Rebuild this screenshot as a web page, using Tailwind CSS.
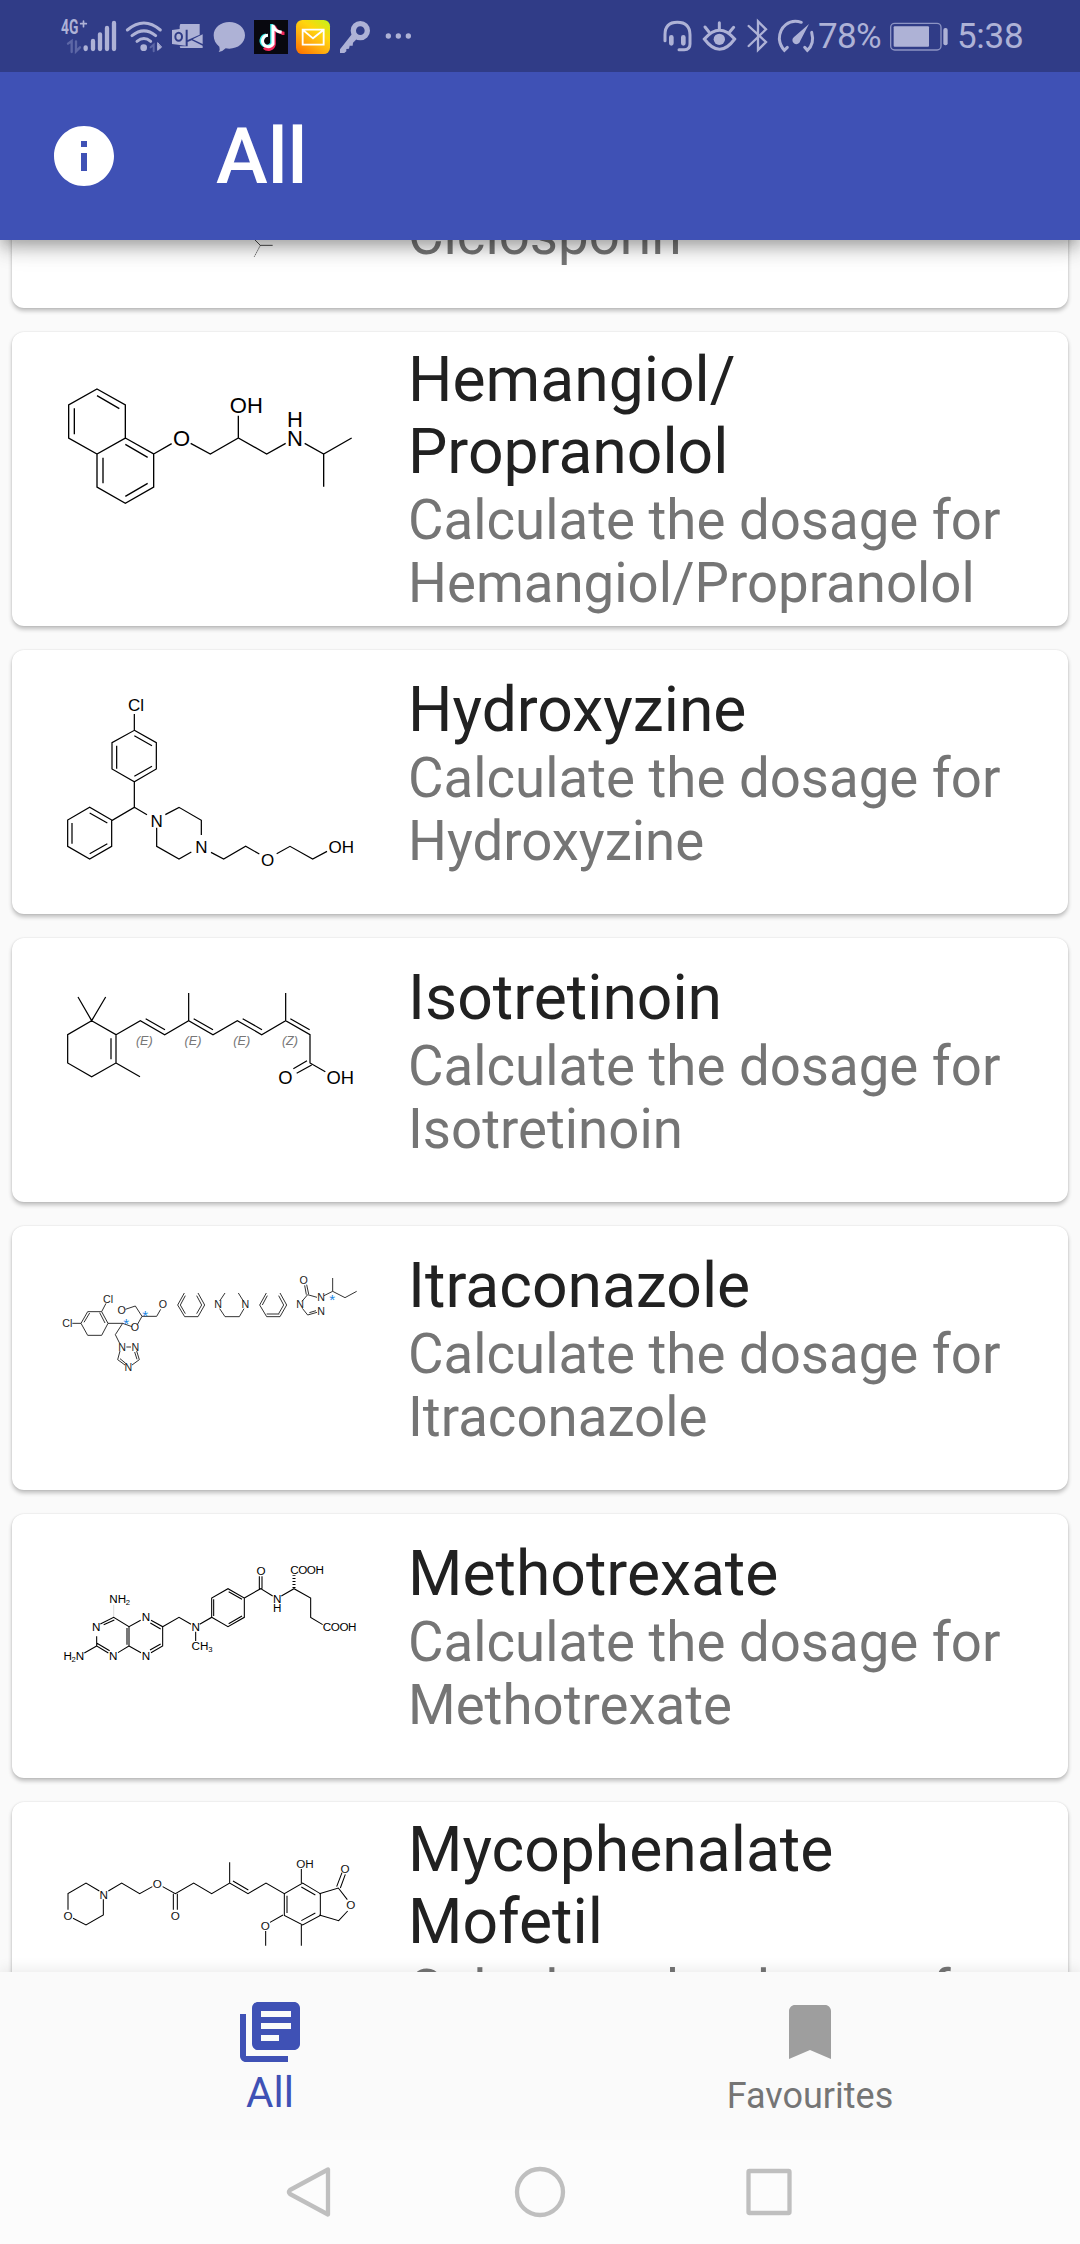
<!DOCTYPE html>
<html lang="en">
<head>
<meta charset="utf-8">
<title>All</title>
<script src="https://cdn.jsdelivr.net/npm/@tailwindcss/browser@4"></script>
</head>
<body class="w-[1080px] h-[2244px] flex flex-col overflow-hidden bg-[#fafafa] font-['Roboto',sans-serif]">

<!-- status bar -->
<div class="relative z-20 h-[72px] shrink-0 bg-[#303c87] flex items-center pl-10 text-[#aeb2d6]">
  <svg class="w-[400px] h-[72px]" viewBox="0 0 1200 216" fill="none" stroke-linecap="round">
    <text x="63" y="103" font-family="Roboto" font-weight="700" font-size="58" textLength="52" lengthAdjust="spacingAndGlyphs" fill="#aeb2d6">4G</text>
    <path d="M122 71h17M130.500 63v17" stroke="#aeb2d6" stroke-width="5"/>
    <path d="M84 131l11-8v33M108 124v30l12-12" stroke="#5d67a6" stroke-width="7"/>
    <g stroke="#aeb2d6" stroke-width="13"><path d="M137 142v5M159 123v24M180 103v44M201 84v63M222 69v78"/></g>
    <g stroke="#aeb2d6" stroke-width="9"><path d="M262 90Q312 48 361 90M276 107Q312 78 347 107M291 124Q312 107 332 124"/></g>
    <circle cx="311" cy="143" r="10" fill="#aeb2d6"/>
    <path d="M332 142l9-8v20" stroke="#5d67a6" stroke-width="6"/><path d="M353 129v22l11-9z" fill="#aeb2d6" stroke="#aeb2d6" stroke-width="3"/>
    <path fill="#aeb2d6" d="M421 72h58v32l-36 16v-31h-24v-11zM488 103v29l-30-14zM419 139h24v-13l12-5 33 16v7h-67z"/>
    <path fill="#aeb2d6" d="M396 90l41-5v52l-41-5z"/><ellipse cx="416" cy="110" rx="10" ry="12" stroke="#303c87" stroke-width="6"/>
    <path fill="#aeb2d6" d="M568 66c26 0 47 17 47 40s-21 40-47 40q-6 0-11-1-9 10-21 11 5-7 2-16c-11-8-17-20-17-34 0-23 21-40 47-40z"/>
    <rect x="642" y="60" width="102" height="102" fill="#08080f"/>
    <g stroke-width="9" stroke-linecap="butt"><path stroke="#35e7e5" d="M695 72v58a17 17 0 1 1-17-25M695 73q4 22 30 24"/><path stroke="#f2295b" d="M703 77v55a18 18 0 0 1-31 11M703 78q6 19 26 21v6"/><path stroke="#fff" d="M699 74v58a17 17 0 1 1-15-26M699 76q6 19 26 21"/></g>
    <defs><linearGradient id="mail" x1=".9" y1="0" x2=".2" y2="1"><stop stop-color="#c8f018"/><stop offset=".35" stop-color="#ffd60e"/><stop offset=".65" stop-color="#ffb010"/><stop offset="1" stop-color="#ff7a00"/></linearGradient></defs>
    <rect x="768" y="60" width="102" height="102" rx="19" fill="url(#mail)"/>
    <path d="M788 89h63v45h-63zM789 90l30 25 31-25" stroke="#fff" stroke-width="5.500" stroke-linecap="butt"/>
    <circle cx="961" cy="92" r="21" stroke="#aeb2d6" stroke-width="16"/>
    <path fill="#aeb2d6" d="M936 102l15 14-12 12-1 9-9 0-2 9-8 1 0 7-6 5h-13v-11z"/>
    <g fill="#aeb2d6"><circle cx="1045" cy="108" r="8"/><circle cx="1075" cy="108" r="8"/><circle cx="1105" cy="108" r="8"/></g>
  </svg>
  <svg class="w-[158px] h-[72px] ml-[220px]" viewBox="60 0 474 216" fill="none" stroke="#aeb2d6" stroke-linecap="round">
    <path stroke-width="9" d="M75 122v-18q0-37 37-37t38 37v28q0 17-17 17h-16"/>
    <path stroke-width="14" d="M94 112v18M130 112v18"/>
    <path stroke-width="9" d="M193 117q46-53 91 0-45 62-91 0z"/><circle cx="238" cy="118" r="17" fill="#aeb2d6" stroke="none"/>
    <path stroke-width="9" d="M238 68v20M195 81l12 15M281 82l-12 14"/>
    <path stroke-width="7" d="M326 78l52 48-24 24V64l24 24-52 50"/>
    <path stroke-width="9" d="M484 67c-36-12-66 14-66 50q2 19 15 34l9-9M515 97c6 22 1 42-13 54l-8-9"/>
    <path fill="#aeb2d6" stroke="none" d="M507 72l-26 50a12 12 0 1 1-18-12z"/>
  </svg>
  <span class="text-[35px] leading-none w-[72px] tracking-[-0.7px]">78%</span>
  <svg class="w-[60px] h-[72px]" viewBox="750 0 180 216" fill="none"><rect x="752" y="70" width="151" height="80" rx="12" stroke="#8d94c4" stroke-width="4"/><rect x="761" y="79" width="106" height="61" rx="3" fill="#aeb2d6"/><rect x="910" y="84" width="13" height="52" rx="6" fill="#aeb2d6"/></svg>
  <span class="text-[35px] leading-none ml-[7px] tracking-[-0.3px]">5:38</span>
</div>

<!-- app bar -->
<header class="relative z-10 h-[168px] shrink-0 bg-[#3f51b5] flex items-center pl-12 text-white shadow-[0_6px_12px_-3px_rgba(0,0,0,.2),0_12px_15px_rgba(0,0,0,.14),0_3px_30px_rgba(0,0,0,.12)]">
  <svg class="size-[72px]" viewBox="0 0 24 24" fill="currentColor"><path d="M12 2C6.480 2 2 6.480 2 12s4.480 10 10 10 10-4.480 10-10S17.520 2 12 2zm1 15h-2v-6h2v6zm0-8h-2V7h2v2z"/></svg>
  <h1 class="ml-24 pt-0.5 text-[78px] leading-none font-medium">All</h1>
</header>

<main class="h-[1732px] shrink-0 overflow-hidden px-3">
 <div class="-mt-[196px] flex flex-col gap-6 text-[#757575] text-[54.6px] leading-[63px] font-['Roboto',sans-serif]">

  <section class="h-[264px] shrink-0 rounded-xl bg-white shadow-[0_3px_4px_rgba(0,0,0,.24),0_0_2px_rgba(0,0,0,.12)] flex items-start pl-7 gap-7">
    <svg class="w-[340px] h-[264px]" viewBox="120 -528 1020 792" fill="none" stroke="#222" stroke-width="2.500"><path d="M750 45l31 31h37"/><path stroke-dasharray="4 3" d="M781 76l-18 34"/></svg>
    <div class="pt-6"><h2 class="text-[62.4px] leading-[72px] text-[#212121]">Ciclosporin</h2><p class="pt-px">Calculate the dosage for<br>Ciclosporin</p></div>
  </section>

  <section class="h-[294px] shrink-0 rounded-xl bg-white shadow-[0_3px_4px_rgba(0,0,0,.24),0_0_2px_rgba(0,0,0,.12)] flex items-start pl-7 gap-7">
    <svg class="w-[340px] h-[200px]" viewBox="120 336 1020 600" fill="none" stroke="#000" stroke-width="4">
      <path d="M291 507l85 48v99l-85 48-85-48v-99zM376 654l85 48v99l-85 49-85-49v-99M291 527l67 39M223 565v78M376 673l67 39M309 713v77M376 829l67-39M461 702l54-31M572 670l59 32 84-48 85 48 57-32M715 654v-67M914 670l57 32 84-48M971 702v98"/>
      <g fill="#000" stroke="none" font-family="Liberation Sans" font-size="66" text-anchor="middle"><text x="545" y="677">O</text><text x="739" y="579">OH</text><text x="885" y="621">H</text><text x="885" y="677">N</text></g>
    </svg>
    <div class="pt-3"><h2 class="text-[62.4px] leading-[72px] text-[#212121]">Hemangiol/<br>Propranolol</h2><p class="pt-px">Calculate the dosage for<br>Hemangiol/Propranolol</p></div>
  </section>

  <section class="h-[264px] shrink-0 rounded-xl bg-white shadow-[0_3px_4px_rgba(0,0,0,.24),0_0_2px_rgba(0,0,0,.12)] flex items-start pl-7 gap-7">
    <svg class="w-[340px] h-[200px] mt-[30px]" viewBox="0 0 1020 600" fill="none" stroke="#000" stroke-width="3.700">
      <path d="M283 102v49M283 151l66 37v79l-66 38-67-38v-79zM283 167l53 30M230 197v69M283 289l53-30M283 305v77l-68 40v77l-66 38-66-38v-79l66-38 66 38M149 399l53 30M96 429v62M149 521l53-30M283 382l38 22M376 404l41-22 67 39v44M350 443v56l67 38 37-21M513 517l38 20 66-38 41 23M710 521l40-22 68 38 43-23"/>
      <g fill="#000" stroke="none" font-family="Liberation Sans" font-size="51" text-anchor="middle"><text x="288" y="93">Cl</text><text x="350" y="442">N</text><text x="484" y="519">N</text><text x="683" y="557">O</text><text x="904" y="519">OH</text></g>
    </svg>
    <div class="pt-6"><h2 class="text-[62.4px] leading-[72px] text-[#212121]">Hydroxyzine</h2><p class="pt-px">Calculate the dosage for<br>Hydroxyzine</p></div>
  </section>

  <section class="h-[264px] shrink-0 rounded-xl bg-white shadow-[0_3px_4px_rgba(0,0,0,.24),0_0_2px_rgba(0,0,0,.12)] flex items-start pl-7 gap-7">
    <svg class="w-[340px] h-[130px] mt-8" viewBox="0 0 1020 390" fill="none" stroke="#000" stroke-width="3.700">
      <path d="M114 81l41 71 42-71M155 152l73 42v85l-73 41-72-41v-85zM213 205v63M228 279l72 41M228 194l73-42 73 42 72-42 73 42 73-42 73 42 72-42 73 42v85l46 26M317 146l58 33M446 152V69M461 146l58 33M608 146l58 33M737 152V69M751 146l58 33M801 272l-41 24M815 285l-45 25"/>
      <g fill="#000" stroke="none" font-family="Liberation Sans" font-size="55" text-anchor="middle"><text x="736" y="341">O</text><text x="901" y="341">OH</text></g>
      <g fill="#777" stroke="none" font-family="Liberation Sans" font-style="italic" font-size="38" text-anchor="middle"><text x="313" y="226">(E)</text><text x="459" y="226">(E)</text><text x="605" y="226">(E)</text><text x="750" y="226">(Z)</text></g>
    </svg>
    <div class="pt-6"><h2 class="text-[62.4px] leading-[72px] text-[#212121]">Isotretinoin</h2><p class="pt-px">Calculate the dosage for<br>Isotretinoin</p></div>
  </section>

  <section class="h-[264px] shrink-0 rounded-xl bg-white shadow-[0_3px_4px_rgba(0,0,0,.24),0_0_2px_rgba(0,0,0,.12)] flex items-start pl-7 gap-7">
    <svg class="w-[340px] h-[130px] mt-[34px]" viewBox="0 0 1020 390" fill="none" stroke="#222" stroke-width="2.800">
      <path d="M97 190h26l20-35h42l19 35-19 36h-42l-20-36M132 187l17-28M179 158l16 31M185 155l13-25M204 190h44l28 10M248 190l-22 34 13 26M292 194l14-25-20-31-30 10M306 169h44l12-21M259 261h14M290 273l8 26-22 16M284 276l7 22M240 273l-7 26 22 16M240 296l17 14"/>
      <path d="M433 99l-20 36 21 35h40l20-35-20-36M436 107l-15 28 15 26M470 107l15 28-15 26M555 99l-16 24M539 146l16 24h43l14-24M595 99l15 24M679 99l-20 36 21 35h40l20-35-20-36M682 107l-15 28M716 107l15 28-15 26M680 162h38"/>
      <path d="M794 76l5 28M800 74l6 28M803 104l-17 20M803 104l28 8M787 145l16 20 28-8M808 158l20-6M852 107l26-13V54M878 94l37 19 35-19"/>
      <g fill="#222" stroke="none" font-family="Liberation Sans" font-size="32" text-anchor="middle"><text x="82" y="201">Cl</text><text x="204" y="130">Cl</text><text x="245" y="161">O</text><text x="369" y="145">O</text><text x="285" y="214">O</text><text x="246" y="272">N</text><text x="286" y="272">N</text><text x="265" y="334">N</text><text x="534" y="145">N</text><text x="616" y="145">N</text><text x="791" y="73">O</text><text x="780" y="145">N</text><text x="843" y="124">N</text><text x="843" y="165">N</text></g>
      <g fill="#1e88e5" stroke="none" font-family="Liberation Sans" font-size="46" text-anchor="middle"><text x="259" y="207">*</text><text x="316" y="182">*</text><text x="877" y="135">*</text></g>
    </svg>
    <div class="pt-6"><h2 class="text-[62.4px] leading-[72px] text-[#212121]">Itraconazole</h2><p class="pt-px">Calculate the dosage for<br>Itraconazole</p></div>
  </section>

  <section class="h-[264px] shrink-0 rounded-xl bg-white shadow-[0_3px_4px_rgba(0,0,0,.24),0_0_2px_rgba(0,0,0,.12)] flex items-start pl-7 gap-7">
    <svg class="w-[340px] h-[140px] mt-[26px]" viewBox="0 0 1020 420" fill="none" stroke="#000" stroke-width="3.200">
      <path d="M221 194v38" stroke="#ddd"/>
      <path d="M181 252l40-20 46 28 35-19M191 254l32-14M267 260v58l-33 20M261 264v50M267 318l36 20M205 339l-35-21v-29M171 310l38 22M170 318l-37 21M333 241l35 19v58l-35 20M331 249l31 18M362 312l-32 18M368 260l49-28 36 21M467 275v28M479 253l36-21v-58l49-28 49 28v58l-49 28-49-28M521 228v-50M566 155l40 23M606 228l-40 23M613 174l49-28 36 22M658 146v-37M666 146v-37M724 168l38-22 50 28v58l36 22"/>
      <path d="M762 144v-38" stroke-width="9" stroke-dasharray="3 6"/>
      <g fill="#000" stroke="none" font-family="Liberation Sans" font-size="35" text-anchor="middle"><text x="233" y="190">NH</text><text x="264" y="195" font-size="23">2</text><text x="169" y="273">N</text><text x="318" y="244">N</text><text x="220" y="361">N</text><text x="318" y="361">N</text><text x="83" y="361">H</text><text x="101" y="366" font-size="23">2</text><text x="120" y="361">N</text><text x="467" y="273">N</text><text x="480" y="331">CH</text><text x="511" y="336" font-size="23">3</text><text x="663" y="105">O</text><text x="712" y="188">N</text><text x="712" y="216">H</text><text x="801" y="103" textLength="101">COOH</text><text x="899" y="273" textLength="101">COOH</text></g>
    </svg>
    <div class="pt-6"><h2 class="text-[62.4px] leading-[72px] text-[#212121]">Methotrexate</h2><p class="pt-px">Calculate the dosage for<br>Methotrexate</p></div>
  </section>

  <section class="h-[294px] shrink-0 rounded-xl bg-white shadow-[0_3px_4px_rgba(0,0,0,.24),0_0_2px_rgba(0,0,0,.12)] flex items-start pl-7 gap-7">
    <svg class="w-[340px] h-[140px] mt-7" viewBox="0 0 1020 420" fill="none" stroke="#000" stroke-width="3.100">
      <path d="M178 183l-40-24-54 32v48M99 265l39 20 52-30v-47M205 183l40-24 54 32 38-21M368 170l38 21 55-32 54 32 54-32 55 32 54-32 55 32 55-32 53 32v65l-53 29-55-29v-65M400 191v48M412 191v48M569 159V97M579 153l46 27M741 197v52M784 171l42 24M784 272l42-23M784 159v-42M838 191l57-17 27 35M890 170l16-42M901 174l15-41M923 243l-27 29-58-17M784 285v62M729 255l-39 22M677 303v44"/>
      <g fill="#111" stroke="none" font-family="Liberation Sans" font-size="35" text-anchor="middle"><text x="191" y="206">N</text><text x="84" y="269">O</text><text x="352" y="174">O</text><text x="406" y="269">O</text><text x="795" y="113">OH</text><text x="915" y="128">O</text><text x="932" y="238">O</text><text x="676" y="299">O</text></g>
    </svg>
    <div class="pt-3"><h2 class="text-[62.4px] leading-[72px] text-[#212121]">Mycophenalate<br>Mofetil</h2><p class="pt-px">Calculate the dosage for<br>Mycophenalate Mofetil</p></div>
  </section>
 </div>
</main>

<!-- bottom tabs -->
<nav class="relative z-10 h-[168px] shrink-0 bg-[#fafafa] grid grid-cols-2 shadow-[0_-2px_14px_rgba(0,0,0,.09)]">
  <div class="flex flex-col items-center pt-6 text-[#3f51b5]">
    <svg class="size-[72px]" viewBox="0 0 24 24" fill="currentColor"><path d="M4 6H2v14c0 1.100.9 2 2 2h14v-2H4V6zm16-4H8c-1.100 0-2 .9-2 2v12c0 1.100.9 2 2 2h12c1.100 0 2-.9 2-2V4c0-1.100-.9-2-2-2zm-1 9H9V9h10v2zm-4 4H9v-2h6v2zm4-8H9V5h10v2z"/></svg>
    <span class="text-[42px] leading-[48px] mt-px">All</span>
  </div>
  <div class="flex flex-col items-center pt-6 text-[#757575]">
    <svg class="size-[72px]" viewBox="0 0 24 24" fill="#9e9e9e"><path d="M17 3H7c-1.100 0-1.990.9-1.990 2L5 21l7-3 7 3V5c0-1.100-.9-2-2-2z"/></svg>
    <span class="text-[36px] leading-[42px] mt-[7px]">Favourites</span>
  </div>
</nav>

<!-- system navigation -->
<div class="relative z-20 h-[104px] shrink-0 bg-[#fcfcfc] flex justify-center items-center">
  <svg class="w-[520px] h-[60px]" viewBox="280 2162 520 60" fill="none" stroke="#bfbfbf" stroke-width="4.300" stroke-linejoin="round"><path d="M328 2169.500v45L290 2194q-2-2 0-4z"/><circle cx="540" cy="2192" r="23"/><rect x="748.500" y="2171" width="41" height="42" rx="1"/></svg>
</div>
</body>
</html>
